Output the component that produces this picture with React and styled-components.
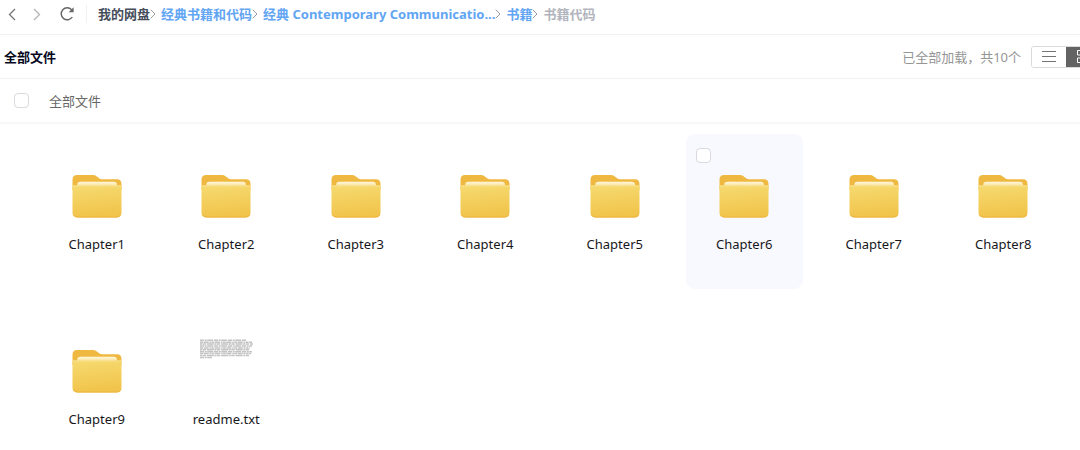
import React from "react";
import styled, { createGlobalStyle } from "styled-components";

const GlobalStyle = createGlobalStyle`
  *, *::before, *::after { box-sizing: border-box; }
  body {
    margin: 0;
    background: #fff;
    color: #14141c;
    font: 13px/20px "Noto Sans", "Noto Sans CJK SC", sans-serif;
    overflow-x: hidden;
  }
  button { font: inherit; color: inherit; }
`;

const Page = styled.main`
  display: flex;
  flex-direction: column;
`;

const Bar = styled.div`
  display: flex;
  align-items: center;
  height: ${(p) => p.$height}px;
  border-bottom: ${(p) => p.$line || 1}px solid ${(p) => (p.$line ? "#f7f7f8" : "#f1f1f3")};
`;

const NavBar = styled(Bar)`
  padding: 0 4px 6px;
`;

const NavButtons = styled.div`
  display: flex;
  gap: 9px;
  padding-right: 6px;
  margin-right: 11px;
  border-right: 1px solid #f1f1f4;
`;

const IconButton = styled.button`
  display: flex;
  align-items: center;
  justify-content: center;
  width: ${(p) => p.$width || 16}px;
  height: 18px;
  padding: 0;
  border: 0;
  background: none;
  color: ${(p) => p.$color};
`;

const Crumbs = styled.nav`
  display: flex;
  align-items: center;
  font-weight: 700;
  white-space: nowrap;
`;

const Crumb = styled.a`
  color: ${(p) => p.$color || "#62a5f3"};
  text-decoration: none;
`;

const Separator = styled.svg`
  width: 6px;
  height: 10px;
  margin-right: 5px;
  flex: none;
`;

const ToolBar = styled(Bar)`
  justify-content: space-between;
  padding-left: 4px;
  overflow: hidden;
`;

const Title = styled.h1`
  margin: 0;
  font-size: 13px;
  color: #05081c;
`;

const ToolGroup = styled.div`
  display: flex;
  align-items: center;
  gap: 10px;
  margin-right: -21px;
  color: #959595;
`;

const ViewSwitch = styled.div`
  display: flex;
  height: 22px;
  border: 1px solid #dadada;
  border-radius: 3px;
  overflow: hidden;
`;

const ViewButton = styled.button`
  display: flex;
  align-items: center;
  justify-content: center;
  width: 34px;
  padding: 0;
  border: 0;
  background: ${(p) => (p.$active ? "#636363" : "#fff")};
  color: ${(p) => (p.$active ? "#fff" : "#737373")};
`;

const SelectBar = styled(Bar)`
  padding-left: 14px;
`;

const SelectLabel = styled.label`
  display: flex;
  align-items: center;
  gap: 20px;
  color: #686868;
`;

const Checkbox = styled.input.attrs({ type: "checkbox" })`
  appearance: none;
  width: 15px;
  height: 15px;
  margin: 0;
  border: 1px solid #d9d9df;
  border-radius: 4px;
  background: #fff;
  &:checked { background: #62a5f3; }
`;

const Files = styled.ul`
  display: grid;
  grid-template-columns: repeat(8, minmax(0, 1fr));
  gap: 20px 12px;
  margin: 0;
  padding: 10px 18px 0 38px;
  list-style: none;
`;

const Tile = styled.li`
  position: relative;
  display: flex;
  flex-direction: column;
  align-items: center;
  height: 155px;
  padding-top: 36px;
  border-radius: 9px;
  background: ${(p) => (p.$hovered ? "#f7f9fe" : "transparent")};
`;

const TileCheckbox = styled(Checkbox)`
  position: absolute;
  top: 14px;
  left: 10px;
`;

const Thumb = styled.svg`
  width: 60px;
  height: 52px;
`;

const FileName = styled.span`
  margin-top: 12px;
  color: #17171b;
`;

const Chevron = ({ left }) => (
  <svg width="8" height="13" viewBox="0 0 8 13" fill="none" stroke="currentColor" strokeWidth="1.3">
    <path d={left ? "M7 1 1.5 6.5 7 12" : "M1 1 6.5 6.5 1 12"} />
  </svg>
);

const Refresh = () => (
  <svg width="16" height="16" viewBox="0 0 16 16" fill="none">
    <path d="M12.6 3.7A6 6 0 1 0 13.3 11" stroke="currentColor" strokeWidth="1.4" />
    <path d="M14.6 1.2V6.2H9.6z" fill="currentColor" />
  </svg>
);

const CrumbArrow = () => (
  <Separator viewBox="0 0 6 10" fill="none" stroke="#999ca3" aria-hidden="true">
    <path d="M.7.7 5 5 .7 9.3" />
  </Separator>
);

const Folder = () => (
  <Thumb viewBox="0 0 60 52" aria-hidden="true">
    <defs>
      <linearGradient id="front" x1="0" y1="0" x2="0.15" y2="1">
        <stop offset="0" stopColor="#f6da70" />
        <stop offset="1" stopColor="#f1c44b" />
      </linearGradient>
      <linearGradient id="sheet" x1="0" y1="0" x2="0" y2="1">
        <stop offset="0" stopColor="#fff8df" />
        <stop offset="1" stopColor="#f7dc86" />
      </linearGradient>
    </defs>
    <path d="M5.500 14V9.500Q5.500 5 10 5H26Q28 5 29.500 6.200L32.500 8.500Q33.500 9.300 35 9.300H50Q54.500 9.300 54.500 14V20H5.500z" fill="#efb941" />
    <path d="M10.200 17V14.700Q10.200 11.700 13.500 11.700H46.500Q50 11.700 50 14.700V17z" fill="url(#sheet)" />
    <path d="M5.500 15.500H54.500V42.500Q54.500 47.500 49.500 47.500H10.500Q5.500 47.500 5.500 42.500z" fill="url(#front)" />
    <path d="M5.500 16H54.500" stroke="#f8e293" />
    <path d="M6.500 44.800Q7.800 47 10.500 47H49.500Q52.300 47 53.600 44.800" fill="none" stroke="#edb43e" />
  </Thumb>
);

const previewLines = [46, 52, 53, 52, 50, 49, 52, 51, 49, 12];

const TextPreview = () => (
  <Thumb viewBox="0 0 60 52" fill="none" stroke="#c2c2c2" strokeWidth="1.5" aria-hidden="true">
    {previewLines.map((length, i) => (
      <path
        key={i}
        d={`M4 ${1.3 + i * 1.9}h${length}`}
        strokeDasharray={["4 .7 2 .5 6 .8", "3 .6 5 .8 1.5 .5", "2 .5 3.4 .9 7 .6"][i % 3]}
      />
    ))}
  </Thumb>
);

const PreviewTile = styled(Tile)`
  padding-top: 30px;
  ${FileName} { margin-top: 18px; }
`;

const crumbs = [
  { label: "我的网盘", color: "#454d5a" },
  { label: "经典书籍和代码" },
  { label: "经典 Contemporary Communicatio..." },
  { label: "书籍" },
  { label: "书籍代码", color: "#b2b4bd" },
];

const folders = [1, 2, 3, 4, 5, 6, 7, 8, 9].map((n) => `Chapter${n}`);

export default function App() {
  return (
    <Page>
      <GlobalStyle />
      <NavBar $height={35}>
        <NavButtons>
          <IconButton $color="#747474" aria-label="后退"><Chevron left /></IconButton>
          <IconButton $color="#b5b5b5" aria-label="前进"><Chevron /></IconButton>
          <IconButton $color="#656565" $width={26} aria-label="刷新"><Refresh /></IconButton>
        </NavButtons>
        <Crumbs aria-label="路径">
          {crumbs.map(({ label, color }, i) => (
            <React.Fragment key={label}>
              {i > 0 && <CrumbArrow />}
              <Crumb href="#" $color={color}>{label}</Crumb>
            </React.Fragment>
          ))}
        </Crumbs>
      </NavBar>
      <ToolBar $height={44}>
        <Title>全部文件</Title>
        <ToolGroup>
          <span>已全部加载，共10个</span>
          <ViewSwitch>
            <ViewButton aria-label="列表">
              <svg width="14" height="12" viewBox="0 0 14 12" stroke="currentColor" strokeWidth="1">
                <path d="M0 .5h14M0 5.500h14M0 10.500h14" />
              </svg>
            </ViewButton>
            <ViewButton $active aria-label="网格">
              <svg width="13" height="13" viewBox="0 0 13 13" fill="none" stroke="currentColor">
                <path d="M.5.5h4.500v4.500H.5zM8 .5h4.500v4.500H8zM.5 8h4.500v4.500H.5zM8 8h4.500v4.500H8z" />
              </svg>
            </ViewButton>
          </ViewSwitch>
        </ToolGroup>
      </ToolBar>
      <SelectBar $height={45} $line={2}>
        <SelectLabel>
          <Checkbox />
          全部文件
        </SelectLabel>
      </SelectBar>
      <Files>
        {folders.map((name) => (
          <Tile key={name} $hovered={name === "Chapter6"}>
            {name === "Chapter6" && <TileCheckbox aria-label={name} />}
            <Folder />
            <FileName>{name}</FileName>
          </Tile>
        ))}
        <PreviewTile>
          <TextPreview />
          <FileName>readme.txt</FileName>
        </PreviewTile>
      </Files>
    </Page>
  );
}
